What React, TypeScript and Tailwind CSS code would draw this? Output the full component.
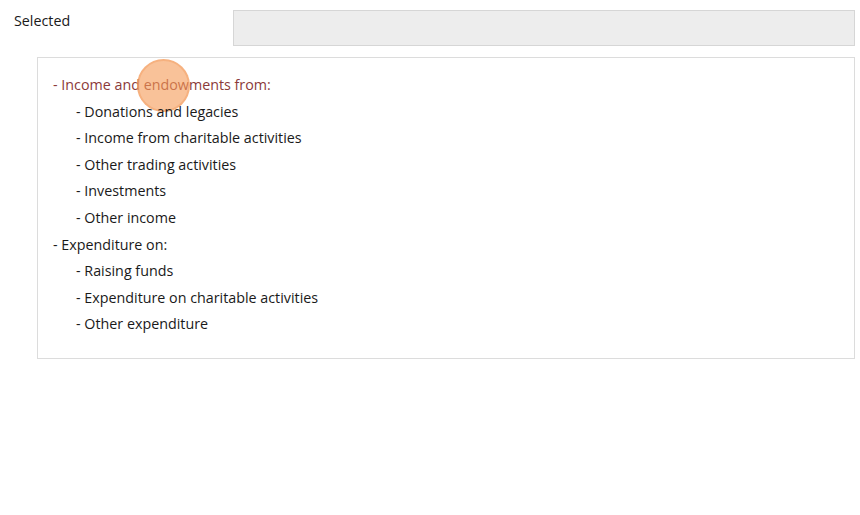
import React from 'react';

const items: { text: string; level: number; active?: boolean }[] = [
  { text: '- Income and endowments from:', level: 0, active: true },
  { text: '- Donations and legacies', level: 1 },
  { text: '- Income from charitable activities', level: 1 },
  { text: '- Other trading activities', level: 1 },
  { text: '- Investments', level: 1 },
  { text: '- Other income', level: 1 },
  { text: '- Expenditure on:', level: 0 },
  { text: '- Raising funds', level: 1 },
  { text: '- Expenditure on charitable activities', level: 1 },
  { text: '- Other expenditure', level: 1 },
];

export default function App() {
  return (
    <div
      className="w-[860px] h-[515px] bg-white overflow-hidden text-[14.3px] text-[#1a1a1a]"
      style={{ fontFamily: '"Open Sans", "Liberation Sans", sans-serif' }}
    >
      {/* Selected row */}
      <div className="flex items-start pt-[10px] pr-[5px]">
        <div className="w-[233px] pl-[14px] pt-[1px] leading-[20px]">Selected</div>
        <div className="flex-1 h-[36px] bg-[#ededed] border border-[#d6d6d6]" />
      </div>

      {/* Tree list */}
      <div className="ml-[37px] mr-[5px] mt-[11px] border border-[#dcdcdc] pt-[14px] pb-[20px] pl-[15px]">
        {items.map((item) => (
          <div
            key={item.text}
            className={
              'relative leading-[26.6px] ' +
              (item.level === 1 ? 'pl-[23px] ' : '') +
              (item.active ? 'text-[#8b3a3a]' : '')
            }
          >
            {item.text}
            {item.active && (
              <span className="absolute left-[84px] top-[-13px] w-[53px] h-[53px] rounded-full bg-[#f59a55]/60 border-2 border-[#f3a066]/50" />
            )}
          </div>
        ))}
      </div>
    </div>
  );
}
